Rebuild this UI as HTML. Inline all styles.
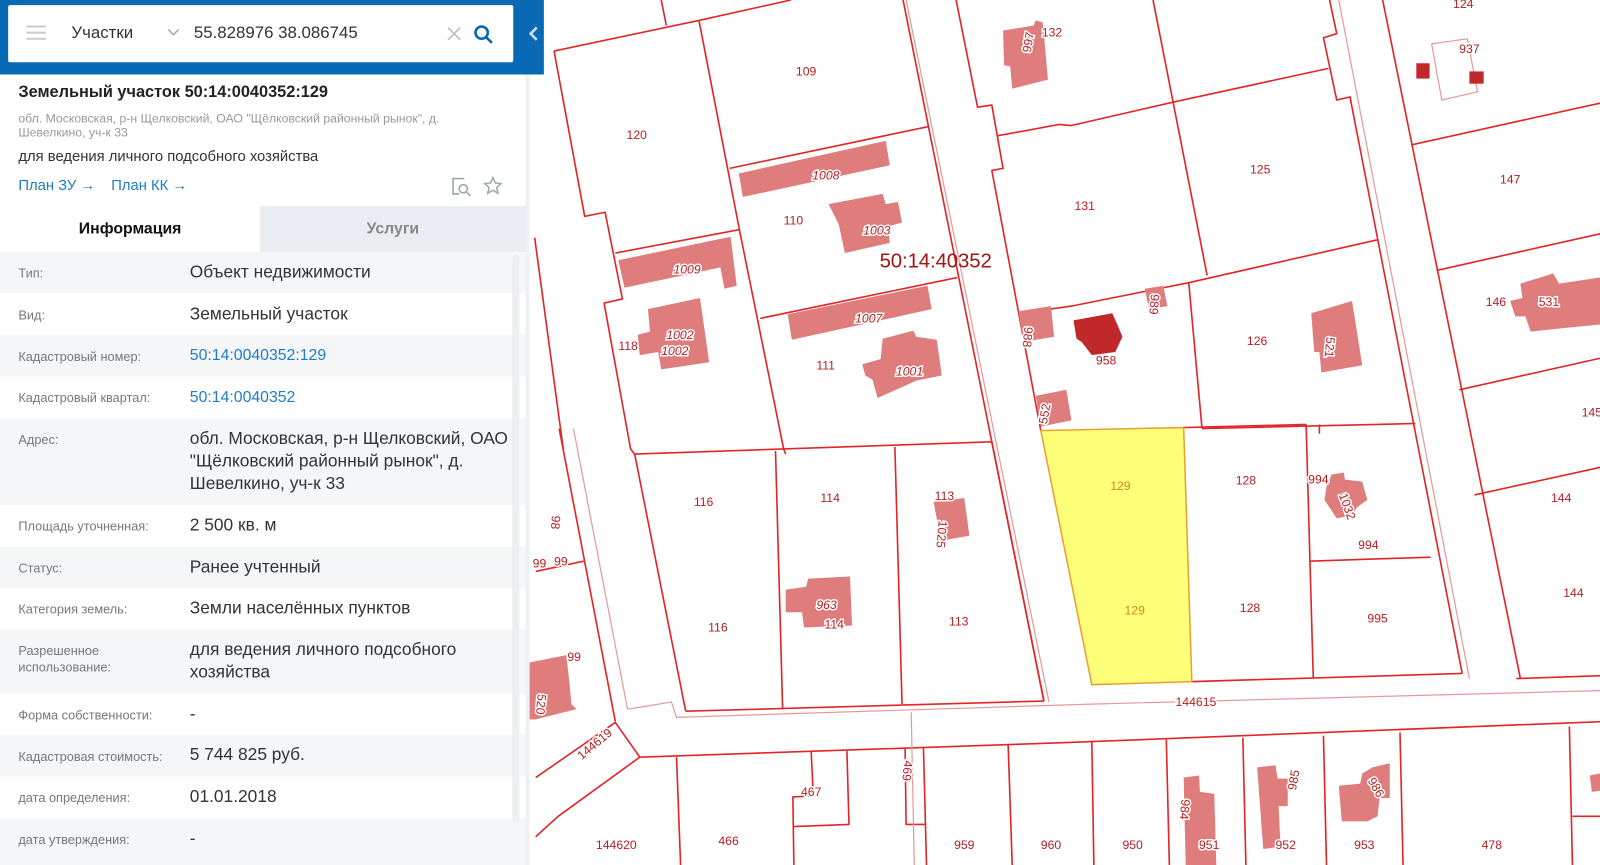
<!DOCTYPE html>
<html><head><meta charset="utf-8"><style>
*{margin:0;padding:0;box-sizing:border-box}
body{width:1600px;height:848px;overflow:hidden;background:#fff;font-family:"Liberation Sans","DejaVu Sans",sans-serif;position:relative}
#wrap{position:absolute;left:0;top:0;width:1568px;height:831px;transform:scale(1.0204);transform-origin:0 0}
#map{position:absolute;left:0;top:0}
#panel{position:absolute;left:0;top:0;width:519px;height:848px;background:#fff;border-right:4px solid #eef0f3}
#hdr{position:absolute;left:0;top:0;width:533px;height:73px;background:#0a69b5}
#sb{position:absolute;left:8px;top:5px;width:495px;height:56px;background:#fff;border-radius:2px}
.t{position:absolute;white-space:nowrap}
.row{position:absolute;left:0;width:515px}
.g{background:#f5f6f8}
.lb{position:absolute;left:18px;font-size:12.5px;color:#777;line-height:16px}
.vl{position:absolute;left:186px;font-size:17px;color:#333;line-height:22px}
.lnk{color:#1f7cc6}
</style></head><body><div id="wrap">
<svg id="map" width="1600" height="848" viewBox="0 0 1600 848" xmlns="http://www.w3.org/2000/svg">
<g fill="none" stroke="#e1262a" stroke-width="1.6" stroke-linejoin="round">
<polyline points="543,50 685,20 775,0"/>
<line x1="648" y1="0" x2="653" y2="25"/>
<polyline points="543,50 573,212 593,208 610,293 592,297 618,440 622,445 672,697"/>
<polyline points="685,20 725,227 768,440 770,445"/>
<line x1="715" y1="165" x2="910" y2="124"/>
<line x1="603" y1="248" x2="725" y2="225"/>
<line x1="745" y1="312" x2="938" y2="272"/>
<line x1="885" y1="0" x2="1023" y2="687"/>
<polyline points="937,0 958,105 972,103 983,165 972,167 1020,422"/>
<polyline points="978,133 1038,122 1050,123 1150,100 1302,67"/>
<line x1="1130" y1="0" x2="1183" y2="270"/>
<polyline points="1000,307 1050,300 1165,277 1350,235"/>
<line x1="1165" y1="277" x2="1178" y2="420"/>
<polyline points="1303,0 1310,33 1297,37 1310,98 1323,95 1433,660"/>
<line x1="1355" y1="0" x2="1490" y2="665"/>
<line x1="1383" y1="142" x2="1573" y2="100"/>
<line x1="1408" y1="265" x2="1573" y2="228"/>
<line x1="1430" y1="382" x2="1573" y2="350"/>
<line x1="1445" y1="485" x2="1573" y2="457"/>
<line x1="1486" y1="665" x2="1573" y2="662"/>
<polyline points="1178,420 1387,415"/>
<line x1="622" y1="445" x2="972" y2="433"/>
<line x1="760" y1="442" x2="767" y2="695"/>
<line x1="877" y1="438" x2="884" y2="690"/>
<line x1="972" y1="433" x2="1023" y2="687"/>
<line x1="672" y1="697" x2="1023" y2="687"/>
<line x1="1160" y1="419" x2="1280" y2="416"/>
<line x1="1280" y1="416" x2="1287" y2="664"/>
<line x1="1283" y1="550" x2="1402" y2="546"/>
<line x1="1168" y1="668" x2="1433" y2="660"/>
<line x1="1293" y1="416" x2="1293" y2="425"/>
<line x1="548" y1="420" x2="603" y2="707"/>
<line x1="524" y1="233" x2="552" y2="440"/>
<line x1="525" y1="560" x2="572" y2="550"/>
<polyline points="525,762 603,708 627,742"/>
<polyline points="525,820 547,800 627,742 1038,728 1600,706"/>
<polyline points="663,742 667,848"/>
<polyline points="795,737 797,780 777,781 778,848"/>
<polyline points="830,736 832,808 778,810"/>
<polyline points="887,733 888,808 907,808"/>
<line x1="905" y1="733" x2="908" y2="848"/>
<line x1="988" y1="730" x2="992" y2="848"/>
<line x1="1070" y1="727" x2="1072" y2="848"/>
<line x1="1143" y1="725" x2="1146" y2="848"/>
<line x1="1218" y1="723" x2="1221" y2="848"/>
<line x1="1297" y1="721" x2="1300" y2="848"/>
<line x1="1372" y1="718" x2="1375" y2="848"/>
<line x1="1538" y1="712" x2="1541" y2="848"/>
<line x1="1541" y1="800" x2="1600" y2="800"/>
</g>
<g fill="none" stroke="#e59a9a" stroke-width="1.2">
<line x1="888" y1="0" x2="1028" y2="688"/>
<line x1="1312" y1="0" x2="1440" y2="665"/>
<line x1="562" y1="420" x2="615" y2="695"/>
<polyline points="615,695 658,688 663,703 1070,690 1600,676"/>
<line x1="893" y1="698" x2="896" y2="848"/>
<polygon points="1403,43 1438,38 1448,90 1413,98"/>
</g>
<polygon points="1020,422 1160,419 1168,668 1070,671" fill="#ffff7a" stroke="#e8a030" stroke-width="1.5"/>
<g fill="#df7c7c">
<polygon points="983,30 1013,25 1015,20 1022,22 1027,78 992,87 990,65 984,64"/>
<polygon points="724,170 868,138 872,162 728,193"/>
<polygon points="812,200 865,190 868,200 880,198 884,218 870,222 872,238 828,248 822,220"/>
<polygon points="606,255 716,232 722,280 710,283 706,262 612,282"/>
<polygon points="635,303 686,292 695,355 648,362 645,345 627,348 625,328 637,325"/>
<polygon points="772,308 909,280 913,303 776,333"/>
<polygon points="865,332 895,324 898,330 918,333 923,368 898,373 860,390 855,372 848,368 845,357 863,352"/>
<polygon points="998,305 1030,300 1033,330 1003,335"/>
<polygon points="1122,283 1140,280 1144,300 1126,303"/>
<polygon points="1015,388 1045,382 1050,412 1020,418"/>
<polygon points="1285,307 1325,295 1335,358 1295,365 1293,345 1288,345"/>
<polygon points="1490,278 1522,268 1528,278 1568,272 1568,318 1527,322 1500,325 1495,310 1485,310 1480,295 1492,292"/>
<polygon points="915,492 945,488 950,525 922,530"/>
<polygon points="770,578 790,575 792,567 833,565 835,613 788,615 786,600 770,600"/>
<polygon points="515,650 555,642 558,668 560,690 565,695 525,705 515,705"/>
<polygon points="1305,465 1317,463 1318,470 1335,472 1340,490 1330,497 1325,505 1310,508 1298,490 1300,477"/>
<polygon points="1160,762 1175,760 1176,776 1190,778 1192,848 1162,848"/>
<polygon points="1232,752 1250,750 1252,763 1262,763 1262,790 1253,790 1255,830 1238,832"/>
<polygon points="1335,758 1345,752 1362,748 1362,782 1352,782 1350,800 1340,805 1315,805 1312,770 1333,768"/>
<polygon points="1558,760 1568,758 1568,775 1560,776"/>
</g>
<g fill="#c0282a">
<polygon points="1052,314 1090,307 1095,318 1100,330 1093,345 1070,348 1060,335 1055,332"/>
<rect x="1388" y="62" width="13" height="15"/><rect x="1440" y="70" width="14" height="12"/>
</g>
<g font-size="12" fill="#b52024" stroke="#fff" stroke-width="3" paint-order="stroke" font-family="Liberation Sans, sans-serif">
<text x="1021" y="36">132</text><text x="1424" y="8">124</text><text x="1430" y="52">937</text>
<text x="780" y="74">109</text><text x="614" y="136">120</text><text x="1225" y="170">125</text>
<text x="1470" y="180">147</text><text x="1053" y="206">131</text><text x="768" y="220">110</text>
<text x="846" y="230" font-style="italic">1003</text><text x="796" y="176" font-style="italic">1008</text>
<text x="660" y="268" font-style="italic">1009</text><text x="1456" y="300">146</text><text x="1508" y="300">531</text>
<text x="838" y="316" font-style="italic">1007</text><text x="653" y="332" font-style="italic">1002</text>
<text x="648" y="348" font-style="italic">1002</text><text x="606" y="343">118</text>
<text x="800" y="362">111</text><text x="878" y="368" font-style="italic">1001</text>
<text x="1222" y="338">126</text><text x="1074" y="357">958</text><text x="1550" y="408">145</text>
<text x="1211" y="475">128</text><text x="1282" y="474">994</text><text x="916" y="490">113</text>
<text x="680" y="496">116</text><text x="804" y="492">114</text><text x="1520" y="492">144</text>
<text x="1331" y="538">994</text><text x="522" y="556">99</text><text x="543" y="554">99</text>
<text x="1532" y="585">144</text><text x="1215" y="600">128</text><text x="1340" y="610">995</text>
<text x="800" y="597" font-style="italic">963</text><text x="808" y="616">114</text>
<text x="930" y="613">113</text><text x="694" y="619">116</text><text x="556" y="648">99</text>
<text x="1152" y="692">144615</text><text x="785" y="780">467</text><text x="704" y="828">466</text>
<text x="935" y="832">959</text><text x="1020" y="832">960</text><text x="1100" y="832">950</text>
<text x="1175" y="832">951</text><text x="1250" y="832">952</text><text x="1327" y="832">953</text>
<text x="1452" y="832">478</text><text x="584" y="832">144620</text>
<text x="0" y="0" transform="translate(570,745) rotate(-40)">144619</text>
<text x="0" y="0" transform="translate(1010,52) rotate(-80)">997</text>
<text x="0" y="0" transform="translate(1128,288) rotate(95)">989</text>
<text x="0" y="0" transform="translate(1004,320) rotate(95)">988</text>
<text x="0" y="0" transform="translate(1026,416) rotate(-80)">552</text>
<text x="0" y="0" transform="translate(1300,330) rotate(95)">521</text>
<text x="0" y="0" transform="translate(920,510) rotate(95)">1025</text>
<text x="0" y="0" transform="translate(1312,485) rotate(70)">1032</text>
<text x="0" y="0" transform="translate(541,505) rotate(95)">98</text>
<text x="0" y="0" transform="translate(527,680) rotate(95)">520</text>
<text x="0" y="0" transform="translate(886,745) rotate(95)">469</text>
<text x="0" y="0" transform="translate(1158,783) rotate(95)">984</text>
<text x="0" y="0" transform="translate(1270,775) rotate(-80)">985</text>
<text x="0" y="0" transform="translate(1340,765) rotate(60)">986</text>
</g>
<g font-size="12" fill="#d08a1a"><text x="1088" y="480">129</text><text x="1102" y="602">129</text></g>
<text x="862" y="262" font-size="20" fill="#a31414" textLength="110" font-family="Liberation Sans, sans-serif">50:14:40352</text>
</svg>

<div id="panel">
<div class="t" style="left:18px;top:82px;font-size:16px;font-weight:bold;color:#222">Земельный участок 50:14:0040352:129</div>
<div class="t" style="left:18px;top:109px;font-size:12px;color:#999;line-height:14px;white-space:normal;width:470px">обл. Московская, р-н Щелковский, ОАО "Щёлковский районный рынок", д. Шевелкино, уч-к 33</div>
<div class="t" style="left:18px;top:146px;font-size:14.5px;color:#333">для ведения личного подсобного хозяйства</div>
<div class="t lnk" style="left:18px;top:174px;font-size:14.5px">План ЗУ →</div>
<div class="t lnk" style="left:109px;top:174px;font-size:14.5px">План КК →</div>
<svg class="t" style="left:441px;top:172px" width="22" height="22" viewBox="0 0 22 22" fill="none" stroke="#9aa" stroke-width="1.6"><path d="M14 3H3v15h6"/><circle cx="13" cy="13" r="4"/><path d="M16 16l4 4"/></svg>
<svg class="t" style="left:473px;top:172px" width="20" height="20" viewBox="0 0 20 20" fill="none" stroke="#9aa" stroke-width="1.5"><path d="M10 2l2.4 5.3 5.6.6-4.2 3.8 1.2 5.6L10 14.4l-5 2.9 1.2-5.6L2 7.9l5.6-.6z"/></svg>
<div class="t" style="left:0;top:202px;width:255px;height:45px;background:#fff;font-size:15.5px;font-weight:bold;text-align:center;line-height:46px;color:#111">Информация</div>
<div class="t" style="left:255px;top:202px;width:260px;height:45px;background:#e9ecf0;font-size:15.5px;font-weight:bold;text-align:center;line-height:46px;color:#888">Услуги</div>

<div class="row g" style="top:247px;height:40px"><div class="lb" style="top:13px">Тип:</div><div class="vl" style="top:9px">Объект недвижимости</div></div>
<div class="row" style="top:287px;height:41px"><div class="lb" style="top:14px">Вид:</div><div class="vl" style="top:10px">Земельный участок</div></div>
<div class="row g" style="top:328px;height:41px"><div class="lb" style="top:14px">Кадастровый номер:</div><div class="vl lnk" style="top:10px;font-size:15.5px">50:14:0040352:129</div></div>
<div class="row" style="top:369px;height:41px"><div class="lb" style="top:13px">Кадастровый квартал:</div><div class="vl lnk" style="top:10px;font-size:15.5px">50:14:0040352</div></div>
<div class="row g" style="top:410px;height:85px"><div class="lb" style="top:13px">Адрес:</div><div class="vl" style="top:9px;width:325px;white-space:normal">обл. Московская, р-н Щелковский, ОАО "Щёлковский районный рынок", д. Шевелкино, уч-к 33</div></div>
<div class="row" style="top:495px;height:41px"><div class="lb" style="top:13px">Площадь уточненная:</div><div class="vl" style="top:9px">2 500 кв. м</div></div>
<div class="row g" style="top:536px;height:40px"><div class="lb" style="top:13px">Статус:</div><div class="vl" style="top:9px">Ранее учтенный</div></div>
<div class="row" style="top:576px;height:41px"><div class="lb" style="top:13px">Категория земель:</div><div class="vl" style="top:9px">Земли населённых пунктов</div></div>
<div class="row g" style="top:617px;height:63px"><div class="lb" style="top:13px">Разрешенное<br>использование:</div><div class="vl" style="top:9px;width:320px;white-space:normal">для ведения личного подсобного хозяйства</div></div>
<div class="row" style="top:680px;height:40px"><div class="lb" style="top:13px">Форма собственности:</div><div class="vl" style="top:9px">-</div></div>
<div class="row g" style="top:720px;height:41px"><div class="lb" style="top:14px">Кадастровая стоимость:</div><div class="vl" style="top:9px">5 744 825 руб.</div></div>
<div class="row" style="top:761px;height:41px"><div class="lb" style="top:13px">дата определения:</div><div class="vl" style="top:9px">01.01.2018</div></div>
<div class="row g" style="top:802px;height:46px"><div class="lb" style="top:13px">дата утверждения:</div><div class="vl" style="top:9px">-</div></div>
<div class="t" style="left:502px;top:250px;width:7px;height:556px;background:#eceef1;border-radius:3px"></div>
</div>

<div id="hdr">
<div id="sb">
<div class="t" style="left:18px;top:20px;width:19px;height:2px;background:#ccc;box-shadow:0 6px 0 #ccc,0 12px 0 #ccc"></div>
<div class="t" style="left:62px;top:18px;font-size:16.5px;color:#333">Участки</div>
<svg class="t" style="left:155px;top:22px" width="14" height="10" viewBox="0 0 14 10" fill="none" stroke="#aaa" stroke-width="1.5"><path d="M2 2l5 5 5-5"/></svg>
<div class="t" style="left:182px;top:18px;font-size:16.5px;color:#333">55.828976 38.086745</div>
<svg class="t" style="left:430px;top:21px" width="14" height="14" viewBox="0 0 14 14" stroke="#bbb" stroke-width="1.5"><path d="M1 1l12 12M13 1L1 13"/></svg>
<svg class="t" style="left:455px;top:18px" width="22" height="22" viewBox="0 0 22 22" fill="none" stroke="#0a69b5" stroke-width="2.6"><circle cx="9" cy="9" r="6"/><path d="M13.5 13.5l5.5 5.5"/></svg>
</div>
<svg class="t" style="left:517px;top:25px" width="12" height="16" viewBox="0 0 12 16" fill="none" stroke="#cfe0f0" stroke-width="2.5"><path d="M9 2L3 8l6 6"/></svg>
</div>
</div></body></html>
